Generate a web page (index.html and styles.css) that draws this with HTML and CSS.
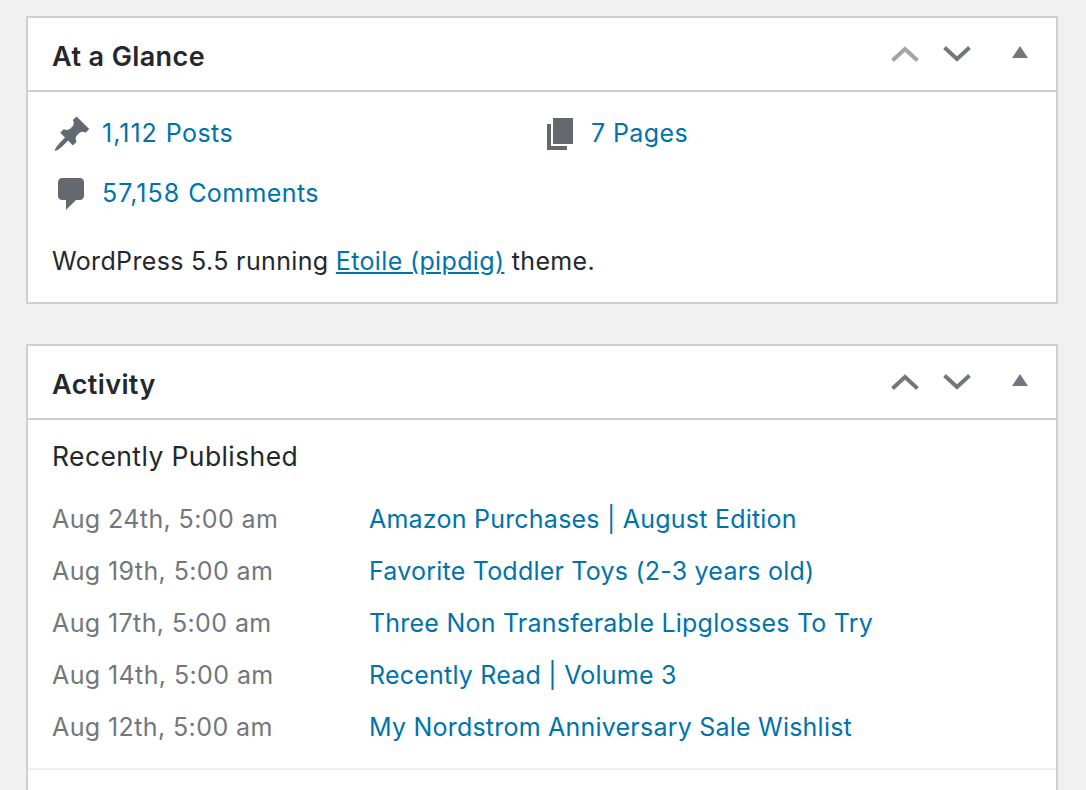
FILE: index.html
```html
<!DOCTYPE html>
<html lang="en">
<head>
<meta charset="utf-8">
<title>Dashboard</title>
<link rel="stylesheet" href="styles.css">
</head>
<body>
<main class="column">
  <section class="card">
    <header class="card-head">
      <h2 class="card-title">At a Glance</h2>
      <div class="controls">
        <svg class="chev dim" viewBox="0 0 28 16"><path d="M1.5 14.5 14 3l12.5 11.5"/></svg>
        <svg class="chev" viewBox="0 0 28 16"><path d="M1.5 1.5 14 13 26.500 1.500"/></svg>
        <svg class="tri" viewBox="0 0 16 12"><path d="M8 0 16 12H0z"/></svg>
      </div>
    </header>
    <div class="glance">
      <ul class="glance-list">
        <li class="glance-item"><svg class="ico" viewBox="0 0 20 20"><path d="M10.44 3.02l1.82-1.82 6.36 6.35-1.83 1.82c-1.05-.68-2.48-.57-3.41.36l-.75.75c-.92.93-1.04 2.35-.35 3.41l-1.83 1.82-2.41-2.41-2.8 2.79c-.42.42-3.38 2.71-3.8 2.29s1.86-3.39 2.28-3.81l2.79-2.79L4.100 9.360l1.830-1.820c1.050.690 2.480.570 3.410-.360l.750-.750c.930-.920 1.040-2.350.350-3.410z"/></svg><a class="glance-link" href="#"><span class="num">1,112 </span>Posts</a></li>
        <li class="glance-item"><svg class="ico" viewBox="0 0 20 20"><path d="M6 15V2h10v13H6zm-1 1h8v2H3V5h2v11z"/></svg><a class="glance-link" href="#">7 Pages</a></li>
        <li class="glance-item"><svg class="ico" viewBox="0 0 20 20"><path d="M5 2h9q.82 0 1.41.59T16 4v7q0 .82-.59 1.41T14 13h-2l-5 5v-5H5q-.82 0-1.41-.59T3 11V4q0-.82.59-1.410T5 2z"/></svg><a class="glance-link" href="#"><span class="num">57,158 </span>Comments</a></li>
      </ul>
      <p class="version">WordPress 5.5 running <a href="#" class="under">Etoile (pipdig)</a> theme.</p>
    </div>
  </section>

  <section class="card">
    <header class="card-head">
      <h2 class="card-title">Activity</h2>
      <div class="controls">
        <svg class="chev" viewBox="0 0 28 16"><path d="M1.5 14.5 14 3l12.5 11.5"/></svg>
        <svg class="chev" viewBox="0 0 28 16"><path d="M1.5 1.5 14 13 26.500 1.500"/></svg>
        <svg class="tri" viewBox="0 0 16 12"><path d="M8 0 16 12H0z"/></svg>
      </div>
    </header>
    <div class="activity">
      <h3 class="activity-title">Recently Published</h3>
      <ul class="posts">
        <li class="post"><span class="date">Aug 24th, 5:00 am</span><a href="#">Amazon Purchases | August Edition</a></li>
        <li class="post"><span class="date">Aug 19th, 5:00 am</span><a href="#">Favorite Toddler Toys (2-3 years old)</a></li>
        <li class="post"><span class="date">Aug 17th, 5:00 am</span><a href="#">Three Non Transferable Lipglosses To Try</a></li>
        <li class="post"><span class="date">Aug 14th, 5:00 am</span><a href="#">Recently Read | Volume 3</a></li>
        <li class="post"><span class="date">Aug 12th, 5:00 am</span><a href="#">My Nordstrom Anniversary Sale Wishlist</a></li>
      </ul>
      <div class="activity-foot"></div>
    </div>
  </section>
</main>
</body>
</html>
```

FILE: styles.css
```css
html, body {
  margin: 0;
  height: 790px;
  overflow: hidden;
  background: #f1f1f1;
}
body {
  font-family: Inter, "Liberation Sans", sans-serif;
  font-size: 25px;
  letter-spacing: .22px;
  color: #23282d;
}
.column {
  padding: 16px 28px 0 26px;
  display: flex;
  flex-direction: column;
  gap: 40px;
}
.card {
  background: #fff;
  border: 2px solid #ccd0d4;
}
.card-head {
  height: 72px;
  border-bottom: 2px solid #ccd0d4;
  display: flex;
  align-items: flex-start;
  justify-content: space-between;
  padding: 0 28px 0 24px;
}
.card-title {
  margin: 0;
  padding-top: 21px;
  font-size: 27px;
  line-height: 36px;
  font-weight: 600;
  letter-spacing: .4px;
}
.controls {
  display: flex;
  align-items: flex-start;
  padding-top: 28px;
}
.chev {
  width: 28px;
  height: 16px;
  margin-right: 24px;
  fill: none;
  stroke: #72777c;
  stroke-width: 4;
}
.chev.dim { stroke: #a0a5aa; }
.chev + .tri { margin-left: 17px; }
.tri {
  width: 16px;
  height: 12px;
  fill: #72777c;
}
a { color: #0073aa; text-decoration: none; }
a.under { text-decoration: underline; }
.glance { padding: 22px 24px 0; height: 210px; box-sizing: border-box; }
.glance-list {
  list-style: none;
  margin: 0;
  padding: 0;
  display: grid;
  grid-template-columns: 489px 1fr;
  row-gap: 20px;
}
.glance-item {
  display: flex;
  align-items: center;
  gap: 10px;
  height: 40px;
}
.glance-link { margin-top: -2px; letter-spacing: .4px; }
.num { letter-spacing: 1px; }
.ico {
  width: 40px;
  height: 40px;
  fill: #646970;
}
.version {
  margin: 29px 0 0;
  line-height: 36px;
  letter-spacing: .35px;
}
.activity { padding: 18px 0 0; }
.activity-title {
  margin: 0 24px;
  font-size: 26.5px;
  font-weight: 400;
  line-height: 36px;
  letter-spacing: .4px;
}
.posts {
  list-style: none;
  margin: 19px 0 0;
  padding: 0 24px 15px;
  border-bottom: 2px solid #eee;
}
.post {
  display: flex;
  height: 52px;
  line-height: 52px;
}
.date {
  width: 317px;
  flex: none;
  color: #72777c;
  letter-spacing: .4px;
}
.activity-foot { height: 40px; }
```
